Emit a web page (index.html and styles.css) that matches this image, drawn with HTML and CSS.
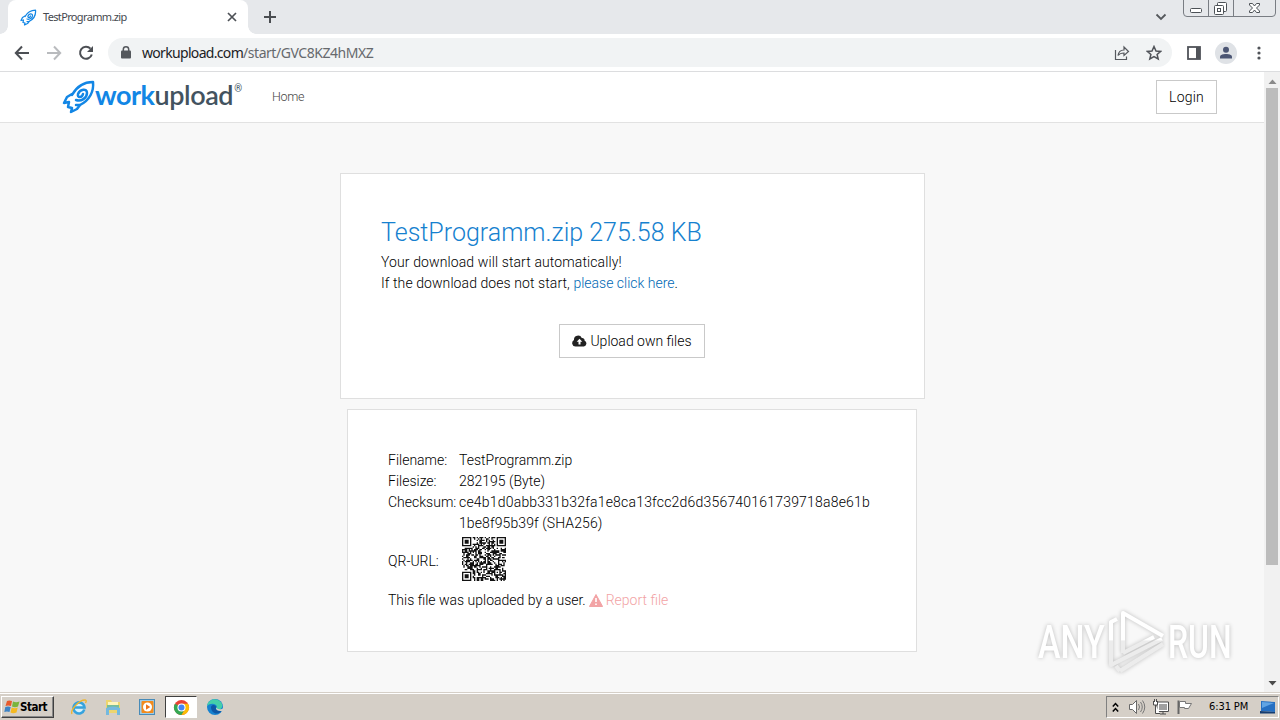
FILE: index.html
```html
<!DOCTYPE html>
<html lang="en">
<head>
<meta charset="utf-8">
<title>TestProgramm.zip</title>
<link rel="stylesheet" href="styles.css">
</head>
<body>
<svg width="0" height="0" class="defs">
  <symbol id="rocket" viewBox="0 0 34 34">
    <g fill="none" stroke="#1286e5" stroke-width="2.5" stroke-linejoin="round" stroke-linecap="round">
      <path d="M10 15C15 6 22 2 31 2C32 11 28 20 18 25L14 25"/>
      <path d="M10 14L5 17L2 23L7 22L6 27L10 28L9 32L15 29L18 25"/>
      <path d="M14 20C19 22 25 18 25 13C25 8 18 9 16 14C15 18 20 18 21 14"/>
    </g>
  </symbol>
</svg>
<header class="tabs">
  <div class="corner-l"></div>
  <div class="tab">
    <svg class="favicon" width="17" height="17"><use href="#rocket"/></svg>
    <span class="tab-title">TestProgramm.zip</span>
    <svg class="tab-x" width="10" height="10" viewBox="0 0 10 10"><path d="M1 1L9 9M9 1L1 9" stroke="#4d5156" stroke-width="1.7"/></svg>
  </div>
  <div class="corner-r"></div>
  <svg class="plus" width="14" height="14" viewBox="0 0 14 14"><path d="M7 1V13M1 7H13" stroke="#4a4d51" stroke-width="2"/></svg>
  <svg class="chev" width="12" height="8" viewBox="0 0 12 8"><path d="M1.500 1.500L6 6L10.500 1.500" fill="none" stroke="#55585c" stroke-width="1.800"/></svg>
  <svg class="winbtns" width="94" height="18" viewBox="0 0 94 18">
    <path d="M.5 0V13Q.5 16.500 4 16.500H89Q92.500 16.500 92.500 13V0M25.500 0V16M50.500 0V16" fill="none" stroke="#797d83"/>
    <g fill="#fff" stroke="#4c5156"><rect x="7.500" y="8.500" width="11" height="4" rx="1"/>
    <rect x="34.500" y="2.500" width="9" height="9" rx="1"/><rect x="31.500" y="5.500" width="9" height="9" rx="1"/><rect x="34.500" y="8.500" width="3" height="3"/>
    <path d="M66.500 3.500H69.500L71.500 6L73.500 3.500H76.500V5L73.500 8L76.500 11V12.500H73.500L71.500 10L69.500 12.500H66.500V11L69.500 8L66.500 5Z"/></g>
  </svg>
</header>
<div class="toolbar">
  <svg class="nav-icons" width="82" height="18" viewBox="0 0 82 18">
    <g fill="none" stroke-width="2"><path d="M15 9H2M8 2.500L1.800 9L8 15.500" stroke="#4c4f54"/><path d="M33 9H46M40 2.500L46.200 9L40 15.500" stroke="#b9bbbe"/>
    <path d="M76.500 4.700A6 6 0 1 0 77.800 10.500" stroke="#4c4f54"/></g><path d="M79 2V8H73Z" fill="#4c4f54"/>
  </svg>
  <div class="omnibox">
    <svg width="10" height="13" viewBox="0 0 10 13"><rect x="0" y="4.500" width="10" height="8" rx="1" fill="#54575c"/><path d="M2.300 5V3.500A2.700 2.700 0 0 1 7.700 3.500V5" fill="none" stroke="#54575c" stroke-width="1.500"/></svg>
    <span class="url"><span class="host">workupload.com</span><span class="path">/start/GVC8KZ4hMXZ</span></span>
    <svg class="share" width="16" height="16" viewBox="0 0 16 16" fill="none" stroke="#56595e" stroke-width="1.200"><path d="M1.500 5V14.500H12.500V11.500M4 10.500C4.500 7 7 5 10 5V2L14.500 6.500L10 10.500V8C7.500 8 5.500 8.500 4 10.500Z"/></svg>
    <svg width="16" height="16" viewBox="0 0 16 16"><path d="M8 1.500L10 6L14.600 6.400L11.100 9.500L12.200 14L8 11.600L3.800 14L4.900 9.500L1.400 6.400L6 6Z" fill="none" stroke="#505359" stroke-width="1.500"/></svg>
  </div>
  <svg class="side" width="14" height="14" viewBox="0 0 14 14"><rect x="1" y="1" width="12" height="12" fill="#fff" stroke="#505359" stroke-width="1.800"/><path d="M9 1H13V13H9Z" fill="#505359"/></svg>
  <svg class="avatar" width="22" height="22" viewBox="0 0 22 22"><circle cx="11" cy="11" r="11" fill="#dfe2e6"/><circle cx="11" cy="7.700" r="3" fill="#4c5674"/><path d="M5 16.500V15C5 12.800 8 12 11 12S17 12.800 17 15V16.500Z" fill="#4c5674"/></svg>
  <svg class="dots" width="4" height="14" viewBox="0 0 4 14" fill="#505359"><circle cx="2" cy="2" r="1.600"/><circle cx="2" cy="7" r="1.600"/><circle cx="2" cy="12" r="1.600"/></svg>
</div>
<div class="viewport">
  <div class="page">
    <nav class="navbar">
      <a class="brand"><svg width="34" height="34"><use href="#rocket"/></svg><span class="work">work</span><span class="upload">upload</span><sup>®</sup></a>
      <a class="home">Home</a>
      <a class="btn login">Login</a>
    </nav>
    <main>
      <section class="card download">
        <h1>TestProgramm.zip 275.58 KB</h1>
        <p class="auto">Your download will start automatically!</p>
        <p class="manual">If the download does not start, <a class="link">please click here</a>.</p>
        <a class="btn own"><svg width="15" height="12" viewBox="0 0 15 12"><path d="M3.500 11.500A3.400 3.400 0 0 1 2 5.100A4.100 4.100 0 0 1 9.800 3A2.400 2.400 0 0 1 12.600 5.800A3 3 0 0 1 12 11.500Z" fill="#222"/><path d="M7.500 3.700L4.700 6.800H6.500V9.600H8.500V6.800H10.300Z" fill="#fff"/></svg><span>Upload own files</span></a>
      </section>
      <section class="card info">
        <dl>
          <dt>Filename:</dt><dd>TestProgramm.zip</dd>
          <dt>Filesize:</dt><dd>282195 (Byte)</dd>
          <dt class="check">Checksum:</dt><dd><span class="hash">ce4b1d0abb331b32fa1e8ca13fcc2d6d356740161739718a8e61b</span><br><span class="hash2">1be8f95b39f (SHA256)</span></dd>
          <dt class="qr-label">QR-URL:</dt><dd class="qr-cell"><svg id="qr" width="44" height="44" viewBox="0 0 33 33"></svg></dd>
        </dl>
        <p class="by"><span>This file was uploaded by a user.</span>
        <a class="report"><svg width="14" height="13" viewBox="0 0 14 13"><path d="M7 0.500L13.600 12.500H.4Z" fill="#f2a3a5" stroke="#f2a3a5" stroke-linejoin="round"/><path d="M7 4V8M7 9.500V11" stroke="#fff" stroke-width="1.600"/></svg><span>Report file</span></a></p>
      </section>
    </main>
  </div>
  <div class="scroll"><svg width="9" height="5" viewBox="0 0 9 5"><path d="M.5 5L4.500 .5L8.500 5Z" fill="#8a8a8a"/></svg><div class="thumb"></div><svg class="down" width="9" height="5" viewBox="0 0 9 5"><path d="M.5 0L4.500 4.500L8.500 0Z" fill="#4a4a4a"/></svg></div>
  <svg class="watermark" width="230" height="80" viewBox="0 0 230 80">
    <defs><linearGradient id="wm" x1="0" y1="10" x2="0" y2="70" gradientUnits="userSpaceOnUse"><stop offset=".48" stop-color="#fff"/><stop offset=".5" stop-color="#ececec"/></linearGradient></defs>
    <g fill="url(#wm)" font-family="Roboto" font-weight="500" font-size="47"><text transform="translate(7 57) scale(.72 1)">ANY</text><text transform="translate(137 57) scale(.68 1)">RUN</text></g>
    <g fill="none" stroke="url(#wm)" stroke-width="4" stroke-linejoin="round"><path d="M92 52V12L132 35M92 52L123 36"/><path d="M86 18L80 21V64L131 38"/><path d="M89 70L132 43M89 70L85 65"/></g>
  </svg>
</div>
<footer class="taskbar">
  <div class="start"><svg width="16" height="16" viewBox="0 0 16 16"><path d="M3 2Q5 1 8 2L7 7Q4 6 1.500 7Z" fill="#e75a2c"/><path d="M9 2.500Q12 4 15.500 2.500L14 7.500Q11 9 8 7.500Z" fill="#79b43c"/><path d="M1.300 8Q4 7 6.700 8L5.500 13Q3 12 .3 13Z" fill="#3d83c5"/><path d="M7.700 8.500Q11 10 13.700 8.500L12.500 13.500Q9 15 6.500 13.500Z" fill="#f5b921"/></svg><b>Start</b></div>
  <div class="launch">
    <svg width="18" height="18" viewBox="0 0 18 18"><path d="M14.300 11.500A5.500 5.500 0 1 1 14.500 9.500H4" fill="#d8f1fb" stroke="#36a3de" stroke-width="2.600"/><path d="M2 16C0 12 9 2 15 2C17 2 16 4 15.500 5" fill="none" stroke="#efb52e" stroke-width="1.300"/></svg>
    <svg width="18" height="18" viewBox="0 0 18 18"><path d="M2 2H7L8 4H16V15H2Z" fill="#edd56e"/><path d="M4 4H14V8H4Z" fill="#fff6bb"/><path d="M3 7H15V10H3Z" fill="#77bd9a"/><path d="M2 17V10Q9 7 16 10V17H13V12H5V17Z" fill="#74b9df"/></svg>
    <svg width="18" height="18" viewBox="0 0 18 18"><rect x="1.500" y="1.500" width="15" height="15" fill="#9ecce8" stroke="#488bb8"/><rect x="3.500" y="3" width="12" height="12" rx="1" fill="#f28a1c"/><circle cx="9.500" cy="9" r="4.500" fill="#fff"/><path d="M8 6.200L12.300 9L8 11.800Z" fill="#ed751c"/></svg>
    <div class="active"><svg width="17" height="17" viewBox="0 0 18 18"><circle cx="9" cy="9" r="8" fill="#e94235"/><path d="M2.070 5A8 8 0 0 0 9 17L12.460 11L9 9Z" fill="#34a853"/><path d="M9 17A8 8 0 0 0 15.930 5H9L12.460 11Z" fill="#fbbc05"/><circle cx="9" cy="9" r="4.300" fill="#fff"/><circle cx="9" cy="9" r="3.200" fill="#4285f4"/></svg></div>
    <svg width="18" height="18" viewBox="0 0 18 18"><circle cx="9" cy="9" r="8" fill="#1682d0"/><path d="M1 8C2 2 8 0 12 2C17 4 18 10 13 12C10 12 10 10 11 9C11 6 5 4 1 8Z" fill="#45cfaa"/><path d="M5 9C6 6 10 7 10 9C9 12 12 14 16 12C13 18 5 16 5 9Z" fill="#0e57a5"/><path d="M10.500 9.500Q11 12 16 11L17.500 10V12.500Q12 14 10 11Z" fill="#d6d0c8"/></svg>
  </div>
  <div class="tray">
    <svg class="up" width="7" height="11" viewBox="0 0 7 11"><path d="M.8 4.500L3.500 1.500L6.200 4.500M.8 9.500L3.500 6.500L6.200 9.500" fill="none" stroke="#000" stroke-width="1.500"/></svg>
    <svg class="i1" width="18" height="16" viewBox="0 0 18 16"><path d="M1.500 5.500H4.500L8.500 1.500V14.500L4.500 10.500H1.500Z" fill="#fff" stroke="#686868"/><path d="M10.500 5Q12.500 8 10.500 11M12.500 3Q16 8 12.500 13M14.500 1.500Q19 8 14.500 14.500" fill="none" stroke="#777"/></svg>
    <svg class="i2" width="17" height="16" viewBox="0 0 17 16"><rect x="6" y="4" width="10" height="8" fill="#a0a0a0" stroke="#fff" stroke-width="2"/><path d="M5 3H16.500V12.500H5ZM8 15H14M11 12.500V15" fill="none" stroke="#4d4d4d"/><path d="M1.500 2V6H5.500V2M2.500 0V3M4.500 0V3M3.500 6V14.500H8" fill="#fff" stroke="#4d4d4d"/></svg>
    <svg class="i3" width="17" height="16" viewBox="0 0 17 16"><path d="M2.500 15V1.500" stroke="#666" stroke-width="2"/><path d="M3.500 2.500H9.500V4.500H15.500L12.500 9.500H8.500V8.500H3.500Z" fill="#fff" stroke="#777"/></svg>
    <span class="clock">6:31 PM</span>
    <svg class="i4" width="16" height="14" viewBox="0 0 16 14"><path d="M1 1L15 2V12L1 11Z" fill="#256fc2"/><path d="M2 2L14 3L2 8Z" fill="#60a4e4"/><path d="M0 11L15 12V13.500H0Z" fill="#153c70"/></svg>
  </div>
</footer>
<script src="qr.js"></script>
</body>
</html>
```
FILE: styles.css
```css
* { box-sizing: border-box; }
body { margin: 0; width: 1280px; height: 720px; overflow: hidden; display: flex; flex-direction: column; font: 300 14px/21px Roboto, sans-serif; color: #000; background: #fff; }
svg { display: block; flex: none; }
.defs { position: absolute; }
p, h1, dl, dd { margin: 0; }
.tabs { height: 34px; flex: none; background: #e6e8eb; display: flex; align-items: center; }
.tab { width: 240px; height: 34px; background: #fff; border-radius: 8px 8px 0 0; display: flex; align-items: center; padding: 0 11px 0 12px; }
.corner-l, .corner-r { width: 8px; height: 34px; background: radial-gradient(circle at 0 0, transparent 7.5px, #fff 8px) no-repeat 0 26px / 8px 8px; }
.corner-r { background: radial-gradient(circle at 8px 0, transparent 7.5px, #fff 8px) no-repeat 0 26px / 8px 8px; }
.tab-title { font: 11px/16px "Noto Sans", sans-serif; letter-spacing: -.65px; color: #45494e; margin-left: 6px; }
.tab-x { margin-left: auto; }
.plus { margin-left: 7px; }
.chev { margin-left: auto; }
.winbtns { margin: 0 3px 0 16px; align-self: flex-start; }
.toolbar { height: 38px; flex: none; background: #fff; border-bottom: 1px solid #dcdddf; display: flex; align-items: center; }
.nav-icons { margin-left: 14px; }
.omnibox { width: 1064px; height: 29px; margin-left: 12px; border-radius: 15px; background: #f1f3f4; display: flex; align-items: center; padding: 0 10px 0 13px; }
.url { margin-left: 11px; font: 14px/20px "Noto Sans", sans-serif; color: #202124; white-space: nowrap; }
.host { letter-spacing: -.68px; }
.path { color: #66696d; letter-spacing: -.46px; }
.share { margin-left: auto; margin-right: 16px; }
.side { margin-left: 15px; }
.avatar { margin-left: 14px; }
.dots { margin-left: 20px; }
.viewport { height: 620px; flex: none; display: flex; position: relative; }
.page { width: 1264px; background: #f8f8f8; }
.navbar { height: 51px; background: #fff; border-bottom: 1px solid #e2e2e2; display: flex; align-items: center; padding: 0 47px 0 62px; }
.brand { display: flex; align-items: center; width: 181px; font: 500 27px/32px Lato, sans-serif; color: #43535f; white-space: nowrap; }
.brand svg { margin-right: -1px; }
.brand sup { font: 10px/12px Roboto, sans-serif; align-self: flex-start; margin: 4px 0 0 1px; }
.brand span { font-weight: 700; letter-spacing: -.5px; padding-bottom: 4px; }
.brand .upload { font-weight: 600; letter-spacing: -.4px; }
.brand .work { color: #1286e5; }
.home { margin-left: 29px; font-size: 12.5px; line-height: 19px; padding-bottom: 1px; color: #444; letter-spacing: -.3px; }
.btn { border: 1px solid #c9c9c9; background: #fff; height: 34px; display: flex; align-items: center; justify-content: center; }
.login { width: 61px; margin-left: auto; letter-spacing: .2px; }
main { padding: 50px 0 0 340px; }
.card { background: #fff; border: 1px solid #dfdfdf; }
.download { width: 585px; height: 226px; padding: 40px; }
h1 { font: 300 25px/37px Roboto, sans-serif; color: #1681cf; white-space: nowrap; margin-bottom: 1px; }
.auto { letter-spacing: .11px; }
.manual { letter-spacing: .08px; }
.link { color: #0068b4; letter-spacing: 0; }
.own { width: 146px; margin: 30px 0 0 178px; gap: 3px; white-space: nowrap; }
.info { width: 570px; height: 243px; margin: 10px 0 0 7px; padding: 40px; }
dl { display: grid; grid-template-columns: 71px 412px; }
dt, dd, .by { white-space: nowrap; }
.hash { letter-spacing: .2px; }
.hash2 { letter-spacing: .1px; }
.qr-label { height: 55px; padding-top: 17px; }
.qr-cell { padding: 3px 0 0 3px; }
.by { display: flex; align-items: center; gap: 3px; margin-top: 1px; }
.report { color: #f2a3a5; display: flex; align-items: center; gap: 3px; }
.scroll { width: 16px; background: #f1f1f1; display: flex; flex-direction: column; align-items: center; padding-top: 7px; }
.thumb { width: 12px; height: 477px; margin-top: 4px; background: #bcbcbc; }
.down { margin-top: auto; margin-bottom: 6px; }
.watermark { position: absolute; left: 1031px; top: 529px; filter: drop-shadow(0 0 2px rgba(0,0,0,.24)); }
.taskbar { height: 28px; flex: none; background: #d5cfc7; border-top: 1px solid #d5cfc7; box-shadow: inset 0 1px #fff; display: flex; align-items: center; padding-top: 1px; }
.start { width: 53px; height: 22px; margin-left: 1px; border: 1px solid; border-color: #fff #404040 #404040 #fff; box-shadow: inset -1px -1px #888; display: flex; align-items: center; padding-left: 2px; color: #000; }
.start b { font: bold 11.5px/14px "DejaVu Sans Condensed", "DejaVu Sans", sans-serif; letter-spacing: -.5px; }
.launch { display: flex; align-items: center; margin-left: 16px; gap: 16px; }
.active { width: 32px; height: 22px; margin: 0 -7px 0 -7px; border: 1px solid; border-color: #404040 #fff #fff #404040; background: #fff; display: flex; align-items: center; justify-content: center; }
.tray { margin-left: auto; margin-right: 1px; width: 173px; height: 22px; border: 1px solid; border-color: #808080 #fff #fff #808080; display: flex; align-items: center; padding-left: 5px; color: #000; }
.i1 { margin-left: 9px; }
.i2 { margin-left: 6px; }
.i3 { margin-left: 7px; }
.clock { margin-left: 16px; font: 11px/16px "DejaVu Sans Condensed", "DejaVu Sans", sans-serif; letter-spacing: -.1px; white-space: nowrap; }
.i4 { margin-left: auto; margin-right: 2px; }
```
FILE: qr.js
```js
// Fills the QR symbol: three finder squares, one alignment square, data modules elsewhere.
const n = 33;
let seed = 2357;
const next = () => (seed = (seed * 16807) % 2147483647) / 2147483647;
const square = (x, y, cx, cy) => Math.max(Math.abs(x - cx), Math.abs(y - cy));
let d = "";
for (let y = 0; y < n; y++) {
  for (let x = 0; x < n; x++) {
    let on = next() < 0.53;
    for (const [cx, cy] of [[3, 3], [29, 3], [3, 29]]) {
      const r = square(x, y, cx, cy);
      if (r <= 4) on = r !== 2 && r !== 4;
    }
    const a = square(x, y, 26, 26);
    if (a <= 2) on = a !== 1;
    if (on) d += `M${x} ${y}h1v1h-1z`;
  }
}
document.getElementById("qr").innerHTML = `<path d="${d}" fill="#111"/>`;
```
